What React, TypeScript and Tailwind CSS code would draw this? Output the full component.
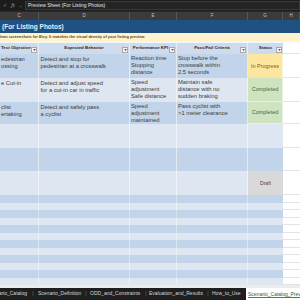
import React from "react";

const COLS = "grid grid-cols-[39px_91px_47px_71px_35px_17px]";

function FilterBtn() {
  return (
    <span className="absolute right-[1px] bottom-[1px] w-[6px] h-[6px] bg-[#f7f7f7] border border-[#a8a8a8] flex items-center justify-center">
      <svg width="3" height="2" viewBox="0 0 4 3">
        <path d="M0 0 L4 0 L2 3 Z" fill="#555" />
      </svg>
    </span>
  );
}

function Lines({ text }: { text: string }) {
  return (
    <>
      {text.split("\n").map((l, i) => (
        <div key={i} className="whitespace-nowrap">
          {l}
        </div>
      ))}
    </>
  );
}

type Row = {
  c: string;
  d: string;
  e: string;
  f: string;
  g?: "prog" | "done" | "draft";
  h: string;
  dark: boolean;
};

const rows: Row[] = [
  {
    c: "edestrian\nossing",
    d: "Detect and stop for\npedestrian at a crosswalk",
    e: "Reaction time\nStopping\ndistance",
    f: "Stop before the\ncrosswalk within\n2.5 seconds",
    g: "prog",
    h: "h-[24px]",
    dark: true,
  },
  {
    c: "e Cut-in",
    d: "Detect and adjust speed\nfor a cut-in car in traffic",
    e: "Speed\nadjustment\nSafe distance",
    f: "Maintain safe\ndistance with no\nsudden braking",
    g: "done",
    h: "h-[24px]",
    dark: false,
  },
  {
    c: "clist\nertaking",
    d: "Detect and safely pass\na cyclist",
    e: "Speed\nadjustment\nmaintained",
    f: "Pass cyclist with\n>1 meter clearance",
    g: "done",
    h: "h-[22px]",
    dark: true,
  },
  { c: "", d: "", e: "", f: "", h: "h-[24px]", dark: false },
  { c: "", d: "", e: "", f: "", h: "h-[23px]", dark: true },
  { c: "", d: "", e: "", f: "", g: "draft", h: "h-[24px]", dark: false },
];

const thinRows = Array.from({ length: 12 }, (_, i) => i % 2 === 0);

function StatusCell({ g, dark }: { g?: Row["g"]; dark: boolean }) {
  if (g === "prog")
    return (
      <div className="bg-[#fde7a0] text-[#7a5c10] flex items-center justify-center text-[5.5px] border-r border-white/50">
        In Progress
      </div>
    );
  if (g === "done")
    return (
      <div className="bg-[#cfe3c1] text-[#3f6a2e] flex items-center justify-center text-[5.5px] border-r border-b border-white/50">
        Completed
      </div>
    );
  if (g === "draft")
    return (
      <div className="bg-[#d9d9d9] text-[#444] flex items-center justify-center text-[5px]">
        Draft
      </div>
    );
  return <div className={dark ? "bg-[#c2d4ea]" : "bg-[#dde6f1]"} />;
}

export default function App() {
  return (
    <div className="w-[300px] h-[300px] overflow-hidden bg-white flex flex-col font-['Liberation_Sans',Arial,sans-serif]">
      {/* formula bar */}
      <div className="h-[11px] bg-[#1c1c1c] flex items-center shrink-0">
        <div className="w-[25px] flex items-center justify-around text-[#9a9a9a] text-[5px] px-[1px]">
          <span>✓</span>
          <span className="italic font-serif">fx</span>
          <span className="text-[4px]">⌄</span>
        </div>
        <div className="flex-1 h-[9px] bg-[#242424] border border-[#3a3a3a] flex items-center pl-[2px] text-[#e2e2e2] text-[5px] whitespace-nowrap">
          Preview Sheet (For Listing Photos)
        </div>
      </div>
      {/* column letters */}
      <div className={`${COLS} h-[9px] bg-[#3b3b3b] text-[#c4c4c4] text-[4.5px] shrink-0 border-t border-[#2a2a2a]`}>
        {["C", "D", "E", "F", "G", "H"].map((l) => (
          <div key={l} className="flex items-center justify-center border-r border-[#555]">
            {l}
          </div>
        ))}
      </div>
      {/* title */}
      <div className="h-[13px] bg-[#1f5283] flex items-center pl-[2px] text-[#e8ecf2] font-bold text-[6.5px] whitespace-nowrap shrink-0">
        (For Listing Photos)
      </div>
      {/* note */}
      <div className="h-[8px] bg-[#fff2cc] flex items-center text-[#5a4a1a] font-bold text-[3.9px] whitespace-nowrap overflow-hidden shrink-0">
        <span className="-ml-[3px]">Clean screenshots for Etsy. It matches the visual density of your listing preview.</span>
      </div>
      <div className="h-[2px] bg-[#f4f6f9] shrink-0" />
      {/* header */}
      <div className={`${COLS} h-[11px] text-[#1e2a3a] font-bold text-[4.4px] shrink-0`}>
        <div className="relative bg-[#cddbed] flex items-center whitespace-nowrap overflow-hidden border-r border-white/50">
          <span className="pl-[1px]">Test Objective</span>
          <FilterBtn />
        </div>
        <div className="relative bg-[#cddbed] flex items-center justify-center whitespace-nowrap border-r border-white/50">
          Expected Behavior
          <FilterBtn />
        </div>
        <div className="relative bg-[#cddbed] flex items-center justify-center whitespace-nowrap border-r border-white/50">
          <span className="pr-[5px]">Performance KPI</span>
          <FilterBtn />
        </div>
        <div className="relative bg-[#cddbed] flex items-center justify-center whitespace-nowrap border-r border-white/50">
          Pass/Fail Criteria
          <FilterBtn />
        </div>
        <div className="relative bg-[#cddbed] flex items-center justify-center whitespace-nowrap">
          Status
          <FilterBtn />
        </div>
        <div className="bg-white border-b border-[#e3e3e3]" />
      </div>
      {/* data rows */}
      {rows.map((r, i) => {
        const bg = r.dark ? "bg-[#c2d4ea]" : "bg-[#dde6f1]";
        return (
          <div key={i} className={`${COLS} ${r.h} text-[#3b3b3b] text-[5.8px] leading-[7px] shrink-0`}>
            <div className={`${bg} overflow-hidden pl-[1px] pt-[2px] border-r border-white/50`}>
              <Lines text={r.c} />
            </div>
            <div className={`${bg} overflow-hidden pl-[1.5px] pt-[2px] border-r border-white/50`}>
              <Lines text={r.d} />
            </div>
            <div className={`${bg} overflow-hidden pl-[1px] pt-[1px] border-r border-white/50`}>
              <Lines text={r.e} />
            </div>
            <div className={`${bg} overflow-hidden pl-[1px] pt-[1px] border-r border-white/50`}>
              <Lines text={r.f} />
            </div>
            <StatusCell g={r.g} dark={r.dark} />
            <div className="bg-white border-b border-[#e3e3e3]" />
          </div>
        );
      })}
      {thinRows.map((dark, i) => {
        const bg = dark ? "bg-[#c2d4ea]" : "bg-[#dde6f1]";
        return (
          <div key={"t" + i} className={`${COLS} h-[7.5px] shrink-0`}>
            <div className={`${bg} border-r border-white/40`} />
            <div className={`${bg} border-r border-white/40`} />
            <div className={`${bg} border-r border-white/40`} />
            <div className={`${bg} border-r border-white/40`} />
            <div className={bg} />
            <div className="bg-white border-b border-[#e3e3e3]" />
          </div>
        );
      })}
      <div className="flex-1 bg-[#ececec]" />
      {/* tabs */}
      <div className="h-[12px] bg-[#1f1f1f] flex items-center text-[#d6d6d6] text-[5px] whitespace-nowrap shrink-0">
        <span className="w-[30px] overflow-hidden flex justify-end pr-[3px]">ario_Catalog</span>
        <span className="text-[#777] w-[6px] text-center">|</span>
        <span className="w-[47px] pl-[2px]">Scenario_Definition</span>
        <span className="text-[#777] w-[6px] text-center">|</span>
        <span className="w-[55px] pl-[1px]">ODD_and_Constraints</span>
        <span className="text-[#777] w-[4px] text-center">|</span>
        <span className="w-[57px] pl-[1px]">Evaluation_and_Results</span>
        <span className="text-[#777] w-[6px] text-center">|</span>
        <span className="w-[35px] pl-[1px]">How_to_Use</span>
        <div className="flex-1 h-full bg-white flex items-center pl-[2px] overflow-hidden">
          <span className="text-[#1f5f36] border-b border-[#2e8b57] leading-[6px]">Scenario_Catalog_Preview</span>
        </div>
      </div>
    </div>
  );
}
